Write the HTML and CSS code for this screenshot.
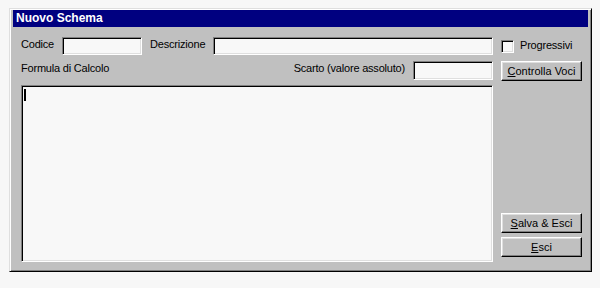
FILE: index.html
```html
<!DOCTYPE html>
<html lang="it">
<head>
  <meta charset="UTF-8">
  <title>Nuovo Schema</title>
  <link rel="stylesheet" href="styles.css">
</head>
<body>
  <div class="window">
    <div class="titlebar">Nuovo Schema</div>
    <form class="content" id="schemaForm">
      <div class="row">
        <label for="codice">Codice</label>
        <input type="text" id="codice" class="field codice">
        <label for="descrizione">Descrizione</label>
        <input type="text" id="descrizione" class="field descrizione">
      </div>
      <label class="check"><span class="box"></span><span>Progressivi</span></label>

      <div class="row row-2">
        <label>Formula di Calcolo</label>
        <label for="scarto" class="push">Scarto (valore assoluto)</label>
        <input type="text" id="scarto" class="field scarto">
      </div>
      <button type="button" class="btn btn-check"><u>C</u>ontrolla Voci</button>

      <div class="formula"><span class="caret"></span></div>
      <div class="actions">
        <button type="button" class="btn"><u>S</u>alva &amp; Esci</button>
        <button type="button" class="btn"><u>E</u>sci</button>
      </div>
    </form>
  </div>
</body>
</html>
```

FILE: styles.css
```css
body {
    margin: 0;
    padding: 0;
    background: #f7f7f7;
    font-family: "Liberation Sans", Arial, sans-serif;
    font-size: 11px;
    letter-spacing: -0.2px;
    color: #000;
}
.window {
    box-sizing: border-box;
    width: 583px;
    height: 264px;
    margin: 8px 0 0 9px;
    background: #c0c0c0;
    border: 1px solid;
    border-color: #dfdfdf #000 #000 #dfdfdf;
    box-shadow: inset 1px 1px #fff, inset -1px -1px #808080;
    padding: 1px;
}
.titlebar {
    height: 17px;
    margin: 0 2px;
    padding-left: 3px;
    background: #000080;
    color: #fff;
    font-size: 12px;
    font-weight: bold;
    letter-spacing: 0;
    line-height: 17px;
}
.content {
    display: grid;
    grid-template-columns: 1fr 81px;
    grid-template-rows: 23px 25px 177px;
    column-gap: 8px;
    padding: 10px 8px 8px 10px;
}
.row {
    display: flex;
    align-items: flex-start;
}
.row label {
    line-height: 15px;
}
.row-2 {
    padding-top: 1px;
}
.field {
    box-sizing: border-box;
    height: 18px;
    margin: 0;
    padding: 0 2px;
    background: #f8f8f8;
    border: 1px solid;
    border-color: #808080 #fff #fff #808080;
    box-shadow: inset 1px 1px #000, inset -1px -1px #dfdfdf;
    font: inherit;
    outline: none;
}
.codice {
    width: 80px;
    margin: 0 8px;
}
.descrizione {
    flex: 1;
    margin-left: 8px;
}
.scarto {
    width: 80px;
    height: 19px;
    margin-left: 8px;
}
.push {
    margin-left: auto;
}
.check {
    display: flex;
    align-items: flex-start;
}
.box {
    box-sizing: border-box;
    width: 13px;
    height: 13px;
    margin: 3px 6px 0 0;
    background: #f8f8f8;
    border: 1px solid;
    border-color: #808080 #fff #fff #808080;
    box-shadow: inset 1px 1px #000, inset -1px -1px #dfdfdf;
}
.check span + span {
    line-height: 13px;
    padding-top: 2px;
}
.btn {
    box-sizing: border-box;
    width: 81px;
    height: 20px;
    margin: 0;
    padding: 0;
    background: #c0c0c0;
    border: 1px solid;
    border-color: #fff #000 #000 #fff;
    box-shadow: inset -1px -1px #808080, inset 1px 1px #dfdfdf;
    font: inherit;
    color: #000;
}
.btn-check {
    margin-top: 1px;
}
.formula {
    box-sizing: border-box;
    height: 177px;
    padding: 2px 1px;
    background: #f8f8f8;
    border: 1px solid;
    border-color: #808080 #fff #fff #808080;
    box-shadow: inset 1px 1px #000, inset -1px -1px #dfdfdf;
}
.caret {
    display: block;
    width: 2px;
    height: 12px;
    margin: 1px 0 0 1px;
    background: #000;
}
.actions {
    display: flex;
    flex-direction: column;
    justify-content: flex-end;
    gap: 4px;
    padding-bottom: 5px;
}
```
